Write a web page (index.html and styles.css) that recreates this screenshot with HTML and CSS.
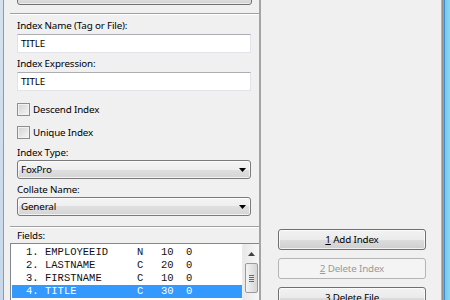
FILE: index.html
```html
<!DOCTYPE html>
<html lang="en">
<head>
    <meta charset="UTF-8">
    <title>Index Designer</title>
    <link rel="stylesheet" href="styles.css">
</head>
<body>
    <div class="frame-left"></div>
    <div class="gutter"></div>

    <div class="panel">
        <div class="panel-top"><div class="top-button"></div></div>

        <div class="form">
            <div class="label first">Index Name (Tag or File):</div>
            <div class="textbox">TITLE</div>
            <div class="label tight">Index Expression:</div>
            <div class="textbox">TITLE</div>

            <div class="check first-check"><span class="box"></span>Descend Index</div>
            <div class="check"><span class="box"></span>Unique Index</div>

            <div class="label type">Index Type:</div>
            <div class="combo">
                <span>FoxPro</span>
                <svg width="7" height="4" viewBox="0 0 7 4"><polygon points="0,0 7,0 3.5,4" fill="#000"/></svg>
            </div>
            <div class="label tight">Collate Name:</div>
            <div class="combo">
                <span>General</span>
                <svg width="7" height="4" viewBox="0 0 7 4"><polygon points="0,0 7,0 3.5,4" fill="#000"/></svg>
            </div>
        </div>

        <div class="fields">
            <div class="label fields-label">Fields:</div>
            <div class="listbox">
                <div class="rows">
                    <div class="row"><span>1.</span><span>EMPLOYEEID</span><span>N</span><span>10</span><span>0</span></div>
                    <div class="row"><span>2.</span><span>LASTNAME</span><span>C</span><span>20</span><span>0</span></div>
                    <div class="row"><span>3.</span><span>FIRSTNAME</span><span>C</span><span>10</span><span>0</span></div>
                    <div class="row selected"><span>4.</span><span>TITLE</span><span>C</span><span>30</span><span>0</span></div>
                </div>
                <div class="vscroll">
                    <div class="arrow-up">
                        <svg width="7" height="4" viewBox="0 0 7 4"><polygon points="0,4 7,4 3.5,0" fill="#404040"/></svg>
                    </div>
                    <div class="thumb"><span></span><span></span><span></span><span></span></div>
                </div>
            </div>
        </div>
    </div>

    <div class="side">
        <button class="btn"><u>1</u> Add Index</button>
        <button class="btn" disabled><u>2</u> Delete Index</button>
        <button class="btn"><u>3</u> Delete File</button>
    </div>

    <div class="frame-right"></div>
</body>
</html>
```

FILE: styles.css
```css
body {
    margin: 0;
    width: 450px;
    height: 300px;
    overflow: hidden;
    display: flex;
    background-color: #f0f0f0;
    font-family: 'Noto Sans', sans-serif;
    font-size: 9.8px;
    letter-spacing: -0.15px;
    color: #000;
}

/* window frame edges */
.frame-left {
    width: 3px;
    flex: none;
    background: linear-gradient(#d4e2ef, #c6d8ea);
    border-right: 1px solid #8e9aa8;
}

.gutter {
    width: 6px;
    flex: none;
}

.frame-right {
    width: 9px;
    flex: none;
    background: linear-gradient(90deg, #c8c8c8 0, #8e8e8e 1.5px, #a8a8a8 3px, #3d8fc4 3px, #3d8fc4 4px, #74c8ef 4px, #8ad6f6 100%);
}

/* left panel */
.panel {
    width: 249px;
    flex: none;
    border-right: 2px solid #a4a4a4;
    display: flex;
    flex-direction: column;
}

.panel-top {
    height: 13px;
    border-bottom: 1px solid #a0a0a0;
    box-shadow: 0 1px 0 #fff;
    padding: 0 7px;
}

.top-button {
    height: 9px;
    margin-top: -4px;
    box-sizing: border-box;
    border: 1px solid #707070;
    border-radius: 3px;
    background: linear-gradient(#e4e4e4, #d2d2d2);
    box-shadow: inset 0 -1px 0 rgba(255, 255, 255, 0.6);
}

.form {
    padding: 0 8px 0 7px;
}

.label {
    line-height: 15px;
    height: 15px;
    white-space: nowrap;
}

.label.first {
    margin-top: 4px;
}

.label.tight {
    margin-top: 3px;
}

.label.type {
    margin-top: 5px;
}

.textbox {
    height: 19px;
    box-sizing: border-box;
    margin-top: 1px;
    background: #fff;
    border: 1px solid #e2e3ea;
    border-top-color: #abadb3;
    padding-left: 3px;
    line-height: 17px;
}

.check {
    display: flex;
    align-items: center;
    height: 15px;
    line-height: 15px;
    margin-top: 8px;
}

.check.first-check {
    margin-top: 11px;
}

.box {
    width: 13px;
    height: 13px;
    box-sizing: border-box;
    border: 1px solid #8f8f8f;
    background: linear-gradient(135deg, #d2d2d2, #f6f6f6);
    box-shadow: inset 0 0 0 1px #f2f2f2;
    margin-right: 3px;
}

.combo {
    height: 19px;
    box-sizing: border-box;
    border: 1px solid #7a7a7a;
    border-radius: 3px;
    background: linear-gradient(#f4f4f4 0%, #eeeeee 50%, #e0e0e0 50%, #d4d4d4 100%);
    box-shadow: inset 0 0 0 1px rgba(255, 255, 255, 0.7);
    display: flex;
    align-items: center;
    justify-content: space-between;
    padding: 0 4px 0 3px;
}

/* fields list */
.fields {
    margin-top: 10px;
    border-top: 1px solid #a0a0a0;
    box-shadow: inset 0 1px 0 #fff;
    flex: 1;
    display: flex;
    flex-direction: column;
}

.fields-label {
    margin: 1px 0 0 7px;
}

.listbox {
    flex: 1;
    display: flex;
    background: #fff;
    border-top: 1px solid #828790;
    border-left: 1px solid #828790;
}

.rows {
    flex: 1;
    padding-top: 2px;
}

.row {
    display: grid;
    grid-template-columns: 19px 92px 24px 25px 20px;
    height: 13px;
    line-height: 13px;
    margin-left: 1px;
    padding-left: 14px;
    font-family: 'Liberation Mono', monospace;
    font-size: 10.5px;
    letter-spacing: 0;
    color: #111;
    white-space: pre;
}

.row.selected {
    background: #3399ff;
    color: #fff;
}

.vscroll {
    width: 16px;
    background: linear-gradient(90deg, #e8e8e8, #f7f7f7);
    border-left: 1px solid #ececec;
    display: flex;
    flex-direction: column;
    align-items: center;
}

.arrow-up {
    height: 17px;
    display: flex;
    align-items: center;
    justify-content: center;
    margin-top: 1px;
}

.thumb {
    width: 13px;
    height: 30px;
    box-sizing: border-box;
    margin-top: 1px;
    border: 1px solid #9a9a9a;
    border-radius: 2px;
    background: linear-gradient(90deg, #f4f4f4, #e4e4e4 50%, #d6d6d6);
    display: flex;
    flex-direction: column;
    align-items: center;
    justify-content: center;
    gap: 1px;
}

.thumb span {
    width: 5px;
    height: 1px;
    background: #6a6a6a;
}

/* right column of buttons */
.side {
    flex: 1;
    display: flex;
    flex-direction: column;
    padding: 229px 15px 0 17px;
}

.btn {
    height: 21px;
    margin: 0 0 8px 0;
    padding: 0;
    font-family: 'Noto Sans', sans-serif;
    font-size: 9.8px;
    letter-spacing: -0.15px;
    color: #000;
    border: 1px solid #707070;
    border-radius: 3px;
    background: linear-gradient(#f2f2f2 0%, #ebebeb 50%, #dddddd 50%, #cfcfcf 100%);
    box-shadow: inset 0 0 0 1px rgba(255, 255, 255, 0.7);
    flex: none;
}

.btn:disabled {
    color: #9a9a9a;
    border-color: #b4b4b4;
    background: #f4f4f4;
    box-shadow: none;
}
```
